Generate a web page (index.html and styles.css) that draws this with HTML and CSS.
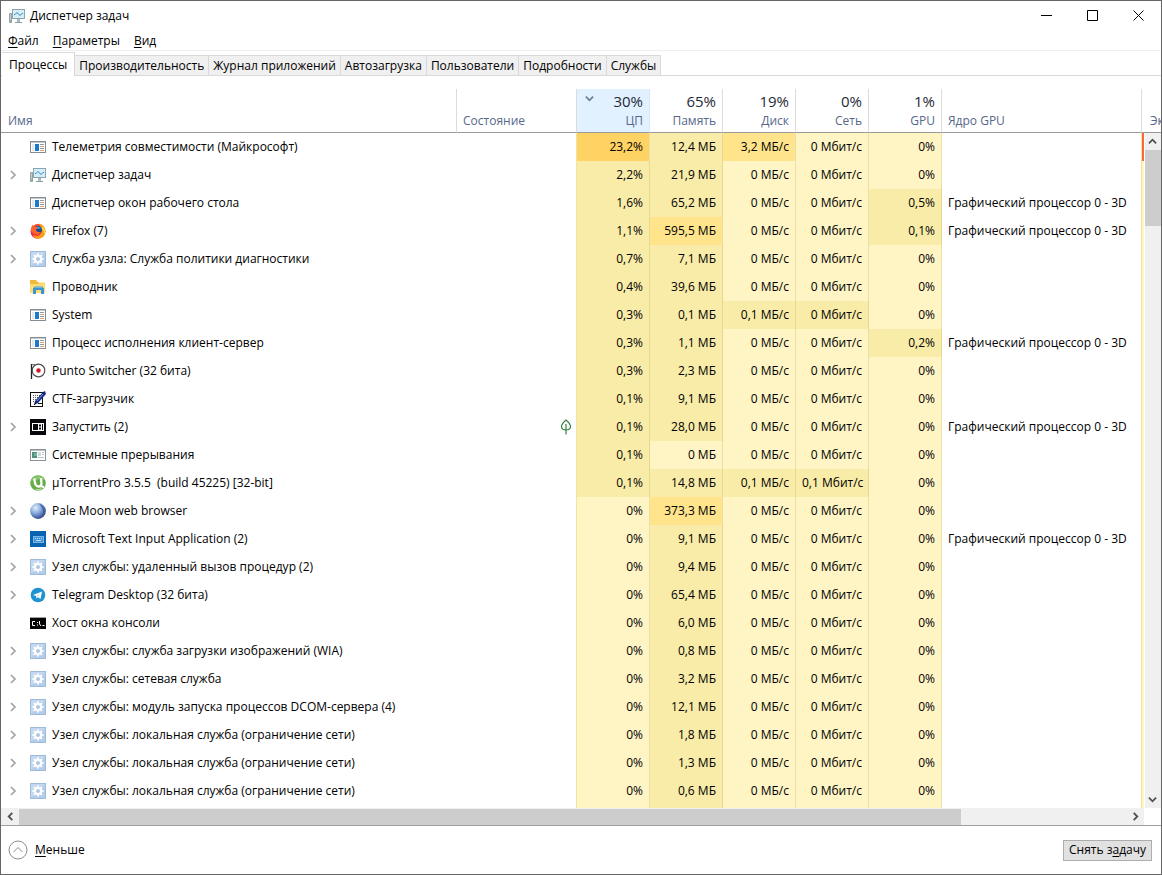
FILE: index.html
```html
<!DOCTYPE html>
<html lang="ru">
<head>
<meta charset="utf-8">
<title>Диспетчер задач</title>
<link rel="stylesheet" href="styles.css">
</head>
<body>
<svg class="sprite" aria-hidden="true">
  <symbol id="i-monitor" viewBox="0 0 16 16">
    <path d="M0.500 5.500h2v9h-2z" fill="#c3cbcf" stroke="#96a1a6"/><path d="M1 13h2" stroke="#5fae62"/>
    <rect x="3.500" y="1.500" width="12" height="9" fill="#d5eef9" stroke="#8ba4ae"/>
    <path d="M5 6.500h1l2-2 3 3 2-2h1" fill="none" stroke="#2c86b8"/>
    <path d="M8 11h3v3H8z" fill="#a9bac2"/><path d="M6 14.500h7" stroke="#8aa0a9"/>
  </symbol>
  <symbol id="i-app" viewBox="0 0 16 16">
    <rect x="0.500" y="2.500" width="15" height="11" fill="#fff" stroke="#858d92"/>
    <path d="M1 3.500h14" stroke="#c3cbd0"/><path d="M2 5h2v7H2z" fill="#e4e8ea"/>
    <path d="M5 5h4v7H5z" fill="#1979ca"/><path d="M10 5.500h4M10 9.500h4" stroke="#8f979c"/><path d="M10 7.500h4M10 11.500h4" stroke="#e5a069"/>
  </symbol>
  <symbol id="i-firefox" viewBox="0 0 16 16">
    <circle cx="8" cy="8.300" r="7.300" fill="#f5402d"/>
    <path d="M8 15.800C3 15.500.5 12 .7 8 2 11 4 14 8 15.800" fill="#d81e5b"/>
    <path d="M9 .5c4 1 6.700 4 6.500 8.500-.3 3.800-3.500 6.600-7.200 6.700-3 0-5-1.700-5.800-4 2 1.800 5.500 2 7.500 0C12 9.500 11 4 9 .5" fill="#ff9c16"/>
    <path d="M12 3c3 2 4 6 2.500 9 0-3-1-5-2.500-6z" fill="#ffdf35"/>
    <circle cx="8" cy="7" r="4" fill="#22468f"/><path d="M5 4.500c2-2 5-1 6.500 1L8 6z" fill="#25a4dd"/>
    <path d="M.8 8C.7 5.500 1.500 3 3 1.500c0 1 .5 1.700 1.500 2 1.500 0 2 .5 3.500 1-.3 1-1.500 1.200-2 2 .4 2.500 2.500 3 5 2.200-1 2.500-4.500 3-7 1.500z" fill="#fb642b"/>
  </symbol>
  <symbol id="i-gear" viewBox="0 0 16 16">
    <rect x="0.500" y="0.500" width="15" height="15" fill="#b4cdeb" stroke="#9fb9da"/>
    <path d="M1 1h14L1 15z" fill="#c4d8ef"/>
    <g stroke="#fff" stroke-width="2"><path d="M8 2.500v11M2.500 8h11M4.100 4.100l7.800 7.800M11.900 4.100l-7.800 7.800"/></g>
    <circle cx="8" cy="8" r="4" fill="#fff"/><circle cx="8" cy="8" r="2" fill="#abc6e6"/>
  </symbol>
  <symbol id="i-folder" viewBox="0 0 16 16">
    <path d="M0 1h6l1.500 2H15v11H0z" fill="#f1b83e"/><path d="M0 5h15v9H0z" fill="#ffdc72"/><path d="M8 3h7v1.500H9z" fill="#fff0b0"/>
    <path d="M3 15V9.500L5 7.500h7l2 2V15h-3v-4H6v4z" fill="#3c95d3"/><path d="M5 8.500h7" stroke="#6fb9e8"/>
  </symbol>
  <symbol id="i-punto" viewBox="0 0 16 16">
    <path d="M1.500 1v15" stroke="#202020" stroke-width="1.300"/><circle cx="8.500" cy="7.500" r="6.300" fill="#fff" stroke="#4e4e4e" stroke-width="1.200"/>
    <path d="M2 1.500h4" stroke="#777"/><circle cx="8.500" cy="7.500" r="2.200" fill="#d3171e"/>
  </symbol>
  <symbol id="i-ctf" viewBox="0 0 16 16">
    <rect x="0.500" y="1.500" width="12" height="14" fill="#fff" stroke="#111"/>
    <path d="M3 4.500h7M3 6.500h7M3 8.500h5M3 10.500h3" stroke="#555" stroke-dasharray="1 1"/>
    <path d="M15 0l1 3-8 9-4 2 1-4 8-9z" fill="#162a80"/><path d="M13 3l-6 7" stroke="#7da0df"/><path d="M4 14l2-2M8 12.500h4" stroke="#111"/>
  </symbol>
  <symbol id="i-start" viewBox="0 0 16 16">
    <path d="M0 0h16v16H0z" fill="#06080c"/><rect x="2.500" y="4.500" width="11" height="7" fill="none" stroke="#fff"/>
    <path d="M8 4h5v8H8z" fill="#fff"/>
    <path d="M9 6.500h2M9 9.500h2" stroke="#06080c" stroke-width="2"/><path d="M12.500 5v6" stroke="#06080c"/>
  </symbol>
  <symbol id="i-interrupt" viewBox="0 0 16 16">
    <rect x="0.500" y="2.500" width="15" height="11" fill="#fff" stroke="#8d9498"/><path d="M1 3.500h14" stroke="#b9c1c5"/>
    <path d="M2 5h5v6H2z" fill="#51907f"/><path d="M4 6h3v3H4z" fill="#69b7a0"/><path d="M8 5h3v4H8z" fill="#d2d8dc"/><path d="M12 5.500h2M12 7.500h2M8 10.500h6" stroke="#b9c3c9"/>
  </symbol>
  <symbol id="i-torrent" viewBox="0 0 16 16">
    <circle cx="8" cy="8" r="7.800" fill="#65ac45"/><path d="M1 6C3 0 12-1 15 5 10 3 5 5 1 6" fill="#8cc66f"/>
    <path d="M4.500 3.500c0 4 .3 8 4 8 2 0 3-1 3-2.500l-.5-6" fill="none" stroke="#fff" stroke-width="2.300"/><path d="M11 9c.3 3 1.500 3 3 3" fill="none" stroke="#fff" stroke-width="2"/>
    <path d="M6 14c2 1.500 5 .5 6-1.500" fill="none" stroke="#e3f3da"/>
  </symbol>
  <symbol id="i-moon" viewBox="0 0 16 16">
    <defs><radialGradient id="moon" cx=".35" cy=".3" r=".8"><stop offset="0" stop-color="#e2edfb"/><stop offset=".45" stop-color="#86a8dc"/><stop offset="1" stop-color="#1c3477"/></radialGradient></defs>
    <circle cx="8" cy="8" r="7.900" fill="url(#moon)"/><path d="M9 .5c6 2 8 9 4 13 1-5-1-9-4-13" fill="#3157a0" opacity=".6"/>
  </symbol>
  <symbol id="i-input" viewBox="0 0 16 16">
    <path d="M0 0h16v16H0z" fill="#0863b1"/><rect x="3.500" y="5.500" width="10" height="6" fill="#4596d8" stroke="#7ab4e6"/>
    <path d="M5 7.500h7" stroke="#b9dbf6" stroke-dasharray="1 1"/><path d="M6 9.500h5" stroke="#b9dbf6"/>
  </symbol>
  <symbol id="i-telegram" viewBox="0 0 16 16">
    <circle cx="8" cy="8" r="7.300" fill="#1f93cf"/><path d="M3 8l9-3.500L10.500 12 8 10.200 6.500 11.500 6 9z" fill="#fff"/><path d="M6 9l4.500-3L7.500 10" fill="#c8dfef"/>
  </symbol>
  <symbol id="i-console" viewBox="0 0 16 16">
    <path d="M0 2h16v12H0z" fill="#050505"/><path d="M0 2.500h16" stroke="#a0a0a0"/>
    <path d="M5 6.500H2.500v4H5M7.500 7v1M7.500 9.500v1M9.500 6v3l1.500 2M12.500 10.500h2" fill="none" stroke="#fff"/>
  </symbol>
  <symbol id="i-leaf" viewBox="0 0 12 16">
    <path d="M6 1C3 3.500 1.500 5.500 1.500 7.500c0 2 1.800 3.500 4.500 3.500s4.500-1.500 4.500-3.500C10.500 5.500 9 3.500 6 1zM6 5v10.500" fill="none" stroke="#358044" stroke-width="1.200"/>
  </symbol>
  <symbol id="i-right" viewBox="0 0 10 10"><path d="M3 1l4 4-4 4" fill="none" stroke="currentColor" stroke-width="1.700"/></symbol>
  <symbol id="i-left" viewBox="0 0 10 10"><path d="M7 1L3 5l4 4" fill="none" stroke="currentColor" stroke-width="2"/></symbol>
  <symbol id="i-next" viewBox="0 0 10 10"><path d="M3 1l4 4-4 4" fill="none" stroke="currentColor" stroke-width="2"/></symbol>
  <symbol id="i-up" viewBox="0 0 10 10"><path d="M1 7l4-4 4 4" fill="none" stroke="currentColor" stroke-width="2"/></symbol>
  <symbol id="i-down" viewBox="0 0 10 10"><path d="M1 3l4 4 4-4" fill="none" stroke="currentColor" stroke-width="2"/></symbol>
</svg>

<div class="window">
  <header class="titlebar">
    <svg class="icon"><use href="#i-monitor"/></svg>
    <h1 class="title">Диспетчер задач</h1>
    <button class="caption" aria-label="Свернуть"><svg viewBox="0 0 11 11"><path d="M0 5.500h11"/></svg></button>
    <button class="caption" aria-label="Развернуть"><svg viewBox="0 0 11 11"><path d="M.5.500h10v10H.5z"/></svg></button>
    <button class="caption" aria-label="Закрыть"><svg viewBox="0 0 11 11"><path d="M.5.500l10 10M10.500.500l-10 10"/></svg></button>
  </header>
  <nav class="menubar">
    <button><u>Ф</u>айл</button><button><u>П</u>араметры</button><button><u>В</u>ид</button>
  </nav>
  <div class="tabs" role="tablist">
    <button class="tab active" role="tab" aria-selected="true">Процессы</button>
    <button class="tab" role="tab">Производительность</button>
    <button class="tab" role="tab">Журнал приложений</button>
    <button class="tab" role="tab">Автозагрузка</button>
    <button class="tab" role="tab">Пользователи</button>
    <button class="tab" role="tab">Подробности</button>
    <button class="tab" role="tab">Службы</button>
  </div>

  <main class="list">
    <table class="grid">
      <colgroup><col><col class="c-state"><col class="c-num"><col class="c-num"><col class="c-num"><col class="c-num"><col class="c-num"><col class="c-engine"><col class="c-energy"></colgroup>
      <thead>
        <tr>
          <th class="name">Имя</th><th>Состояние</th>
          <th class="num sorted"><svg class="sort"><use href="#i-down"/></svg><b>30%</b>ЦП</th>
          <th class="num"><b>65%</b>Память</th><th class="num"><b>19%</b>Диск</th><th class="num"><b>0%</b>Сеть</th><th class="num"><b>1%</b>GPU</th>
          <th>Ядро GPU</th><th class="energy">Эк</th>
        </tr>
      </thead>
      <tbody>
        <tr><td><div class="proc"><i></i><svg class="icon"><use href="#i-app"/></svg>Телеметрия совместимости (Майкрософт)</div></td><td></td><td class="num high">23,2%</td><td class="num low">12,4 МБ</td><td class="num mid">3,2 МБ/с</td><td class="num">0 Мбит/с</td><td class="num">0%</td><td></td><td class="num hot"></td></tr>
        <tr><td><div class="proc"><button class="expand" aria-label="Развернуть группу"><svg><use href="#i-right"/></svg></button><svg class="icon"><use href="#i-monitor"/></svg>Диспетчер задач</div></td><td></td><td class="num low">2,2%</td><td class="num low">21,9 МБ</td><td class="num">0 МБ/с</td><td class="num">0 Мбит/с</td><td class="num">0%</td><td></td><td class="num"></td></tr>
        <tr><td><div class="proc"><i></i><svg class="icon"><use href="#i-app"/></svg>Диспетчер окон рабочего стола</div></td><td></td><td class="num low">1,6%</td><td class="num low">65,2 МБ</td><td class="num">0 МБ/с</td><td class="num">0 Мбит/с</td><td class="num low">0,5%</td><td>Графический процессор 0 - 3D</td><td class="num"></td></tr>
        <tr><td><div class="proc"><button class="expand" aria-label="Развернуть группу"><svg><use href="#i-right"/></svg></button><svg class="icon"><use href="#i-firefox"/></svg>Firefox (7)</div></td><td></td><td class="num low">1,1%</td><td class="num mid">595,5 МБ</td><td class="num">0 МБ/с</td><td class="num">0 Мбит/с</td><td class="num low">0,1%</td><td>Графический процессор 0 - 3D</td><td class="num"></td></tr>
        <tr><td><div class="proc"><button class="expand" aria-label="Развернуть группу"><svg><use href="#i-right"/></svg></button><svg class="icon"><use href="#i-gear"/></svg>Служба узла: Служба политики диагностики</div></td><td></td><td class="num low">0,7%</td><td class="num low">7,1 МБ</td><td class="num">0 МБ/с</td><td class="num">0 Мбит/с</td><td class="num">0%</td><td></td><td class="num"></td></tr>
        <tr><td><div class="proc"><i></i><svg class="icon"><use href="#i-folder"/></svg>Проводник</div></td><td></td><td class="num low">0,4%</td><td class="num low">39,6 МБ</td><td class="num">0 МБ/с</td><td class="num">0 Мбит/с</td><td class="num">0%</td><td></td><td class="num"></td></tr>
        <tr><td><div class="proc"><i></i><svg class="icon"><use href="#i-app"/></svg>System</div></td><td></td><td class="num low">0,3%</td><td class="num low">0,1 МБ</td><td class="num low">0,1 МБ/с</td><td class="num low">0 Мбит/с</td><td class="num">0%</td><td></td><td class="num"></td></tr>
        <tr><td><div class="proc"><i></i><svg class="icon"><use href="#i-app"/></svg>Процесс исполнения клиент-сервер</div></td><td></td><td class="num low">0,3%</td><td class="num low">1,1 МБ</td><td class="num">0 МБ/с</td><td class="num">0 Мбит/с</td><td class="num low">0,2%</td><td>Графический процессор 0 - 3D</td><td class="num"></td></tr>
        <tr><td><div class="proc"><i></i><svg class="icon"><use href="#i-punto"/></svg>Punto Switcher (32 бита)</div></td><td></td><td class="num low">0,3%</td><td class="num low">2,3 МБ</td><td class="num">0 МБ/с</td><td class="num">0 Мбит/с</td><td class="num">0%</td><td></td><td class="num"></td></tr>
        <tr><td><div class="proc"><i></i><svg class="icon"><use href="#i-ctf"/></svg>CTF-загрузчик</div></td><td></td><td class="num low">0,1%</td><td class="num low">9,1 МБ</td><td class="num">0 МБ/с</td><td class="num">0 Мбит/с</td><td class="num">0%</td><td></td><td class="num"></td></tr>
        <tr><td><div class="proc"><button class="expand" aria-label="Развернуть группу"><svg><use href="#i-right"/></svg></button><svg class="icon"><use href="#i-start"/></svg>Запустить (2)</div></td><td class="state"><svg class="leaf"><use href="#i-leaf"/></svg></td><td class="num low">0,1%</td><td class="num low">28,0 МБ</td><td class="num">0 МБ/с</td><td class="num">0 Мбит/с</td><td class="num">0%</td><td>Графический процессор 0 - 3D</td><td class="num"></td></tr>
        <tr><td><div class="proc"><i></i><svg class="icon"><use href="#i-interrupt"/></svg>Системные прерывания</div></td><td></td><td class="num low">0,1%</td><td class="num">0 МБ</td><td class="num">0 МБ/с</td><td class="num">0 Мбит/с</td><td class="num">0%</td><td></td><td class="num"></td></tr>
        <tr><td><div class="proc"><i></i><svg class="icon"><use href="#i-torrent"/></svg>µTorrentPro 3.5.5&nbsp; (build 45225) [32-bit]</div></td><td></td><td class="num low">0,1%</td><td class="num low">14,8 МБ</td><td class="num low">0,1 МБ/с</td><td class="num low">0,1 Мбит/с</td><td class="num">0%</td><td></td><td class="num"></td></tr>
        <tr><td><div class="proc"><button class="expand" aria-label="Развернуть группу"><svg><use href="#i-right"/></svg></button><svg class="icon"><use href="#i-moon"/></svg>Pale Moon web browser</div></td><td></td><td class="num">0%</td><td class="num mid">373,3 МБ</td><td class="num">0 МБ/с</td><td class="num">0 Мбит/с</td><td class="num">0%</td><td></td><td class="num"></td></tr>
        <tr><td><div class="proc"><button class="expand" aria-label="Развернуть группу"><svg><use href="#i-right"/></svg></button><svg class="icon"><use href="#i-input"/></svg>Microsoft Text Input Application (2)</div></td><td></td><td class="num">0%</td><td class="num low">9,1 МБ</td><td class="num">0 МБ/с</td><td class="num">0 Мбит/с</td><td class="num">0%</td><td>Графический процессор 0 - 3D</td><td class="num"></td></tr>
        <tr><td><div class="proc"><button class="expand" aria-label="Развернуть группу"><svg><use href="#i-right"/></svg></button><svg class="icon"><use href="#i-gear"/></svg>Узел службы: удаленный вызов процедур (2)</div></td><td></td><td class="num">0%</td><td class="num low">9,4 МБ</td><td class="num">0 МБ/с</td><td class="num">0 Мбит/с</td><td class="num">0%</td><td></td><td class="num"></td></tr>
        <tr><td><div class="proc"><button class="expand" aria-label="Развернуть группу"><svg><use href="#i-right"/></svg></button><svg class="icon"><use href="#i-telegram"/></svg>Telegram Desktop (32 бита)</div></td><td></td><td class="num">0%</td><td class="num low">65,4 МБ</td><td class="num">0 МБ/с</td><td class="num">0 Мбит/с</td><td class="num">0%</td><td></td><td class="num"></td></tr>
        <tr><td><div class="proc"><i></i><svg class="icon"><use href="#i-console"/></svg>Хост окна консоли</div></td><td></td><td class="num">0%</td><td class="num low">6,0 МБ</td><td class="num">0 МБ/с</td><td class="num">0 Мбит/с</td><td class="num">0%</td><td></td><td class="num"></td></tr>
        <tr><td><div class="proc"><button class="expand" aria-label="Развернуть группу"><svg><use href="#i-right"/></svg></button><svg class="icon"><use href="#i-gear"/></svg>Узел службы: служба загрузки изображений (WIA)</div></td><td></td><td class="num">0%</td><td class="num low">0,8 МБ</td><td class="num">0 МБ/с</td><td class="num">0 Мбит/с</td><td class="num">0%</td><td></td><td class="num"></td></tr>
        <tr><td><div class="proc"><button class="expand" aria-label="Развернуть группу"><svg><use href="#i-right"/></svg></button><svg class="icon"><use href="#i-gear"/></svg>Узел службы: сетевая служба</div></td><td></td><td class="num">0%</td><td class="num low">3,2 МБ</td><td class="num">0 МБ/с</td><td class="num">0 Мбит/с</td><td class="num">0%</td><td></td><td class="num"></td></tr>
        <tr><td><div class="proc"><button class="expand" aria-label="Развернуть группу"><svg><use href="#i-right"/></svg></button><svg class="icon"><use href="#i-gear"/></svg>Узел службы: модуль запуска процессов DCOM-сервера (4)</div></td><td></td><td class="num">0%</td><td class="num low">12,1 МБ</td><td class="num">0 МБ/с</td><td class="num">0 Мбит/с</td><td class="num">0%</td><td></td><td class="num"></td></tr>
        <tr><td><div class="proc"><button class="expand" aria-label="Развернуть группу"><svg><use href="#i-right"/></svg></button><svg class="icon"><use href="#i-gear"/></svg>Узел службы: локальная служба (ограничение сети)</div></td><td></td><td class="num">0%</td><td class="num low">1,8 МБ</td><td class="num">0 МБ/с</td><td class="num">0 Мбит/с</td><td class="num">0%</td><td></td><td class="num"></td></tr>
        <tr><td><div class="proc"><button class="expand" aria-label="Развернуть группу"><svg><use href="#i-right"/></svg></button><svg class="icon"><use href="#i-gear"/></svg>Узел службы: локальная служба (ограничение сети)</div></td><td></td><td class="num">0%</td><td class="num low">1,3 МБ</td><td class="num">0 МБ/с</td><td class="num">0 Мбит/с</td><td class="num">0%</td><td></td><td class="num"></td></tr>
        <tr><td><div class="proc"><button class="expand" aria-label="Развернуть группу"><svg><use href="#i-right"/></svg></button><svg class="icon"><use href="#i-gear"/></svg>Узел службы: локальная служба (ограничение сети)</div></td><td></td><td class="num">0%</td><td class="num low">0,6 МБ</td><td class="num">0 МБ/с</td><td class="num">0 Мбит/с</td><td class="num">0%</td><td></td><td class="num"></td></tr>
        <tr><td></td><td></td><td class="num"></td><td class="num low"></td><td class="num"></td><td class="num"></td><td class="num"></td><td></td><td class="num"></td></tr>
      </tbody>
    </table>
    <div class="vscroll">
      <button aria-label="Вверх"><svg><use href="#i-up"/></svg></button>
      <div class="vthumb"></div>
      <button class="last" aria-label="Вниз"><svg><use href="#i-down"/></svg></button>
    </div>
  </main>
  <div class="hscroll">
    <button aria-label="Влево"><svg><use href="#i-left"/></svg></button>
    <div class="htrack"><div class="hthumb"></div></div>
    <button aria-label="Вправо"><svg><use href="#i-next"/></svg></button>
  </div>
  <footer class="footer">
    <button class="less"><svg viewBox="0 0 20 20"><circle cx="10" cy="10" r="9"/><path d="M5.500 12L10 7.500l4.500 4.500"/></svg><span><u>М</u>еньше</span></button>
    <button class="end">Снять з<u>а</u>дачу</button>
  </footer>
</div>
</body>
</html>
```
FILE: styles.css
```css
* { box-sizing: border-box; }
body {
  margin: 0;
  font: 12px/16px "Open Sans", "Noto Sans", sans-serif;
  color: #000;
  background: #fff;
}
.sprite { position: absolute; width: 0; height: 0; }
button { font: inherit; color: inherit; background: none; border: 0; padding: 0; margin: 0; }
svg { display: block; flex: none; }
u { text-underline-offset: 2px; }
.icon { width: 16px; height: 16px; }

.window {
  display: flex;
  flex-direction: column;
  height: 100vh;
  border: 1px solid #666;
  overflow: hidden;
}
.titlebar { display: flex; align-items: center; height: 29px; padding-left: 8px; flex: none; }
.title { flex: 1; margin: 0 0 0 5px; font-size: 12px; font-weight: 400; }
.caption { display: grid; place-items: center; width: 46px; height: 29px; }
.caption svg { width: 11px; height: 11px; fill: none; stroke: #000; }

.menubar {
  display: flex;
  gap: 14px;
  height: 21px;
  padding: 2px 0 0 7px;
  border-bottom: 1px solid #eee;
  flex: none;
}

.tabs { display: flex; align-items: flex-end; height: 25px; padding-left: 1px; flex: none; box-shadow: inset 0 -1px #d9d9d9; }
.tab {
  height: 21px;
  padding: 0 4px;
  background: #f0f0f0;
  border: 1px solid #d9d9d9;
  border-left: 0;
  white-space: nowrap;
}
.tab.active { height: 24px; padding: 0 7px; background: #fff; border-bottom: 0; }

.list { position: relative; flex: 1; min-height: 0; padding-top: 13px; overflow: hidden; }
.grid { width: 100%; table-layout: fixed; border-collapse: separate; border-spacing: 0; }
.c-state { width: 120px; }
.c-num { width: 73px; }
.c-engine { width: 200px; }
.c-energy { width: 19px; }
th {
  position: relative;
  height: 44px;
  padding: 0 6px 3px;
  vertical-align: bottom;
  text-align: left;
  font-weight: 400;
  color: #56688a;
  border-right: 1px solid #dcdcdc;
  border-bottom: 1px solid #999;
  white-space: nowrap;
  overflow: hidden;
}
th.name { padding-left: 7px; }
th.num { text-align: right; }
th b { display: block; font-size: 15px; line-height: 20px; margin-bottom: 2px; font-weight: 400; color: #1f2937; }
th.energy { padding: 0 0 3px 8px; border-right: 0; }
.sorted { background: #e1f1ff; border-right-color: #d5e8f8; }
.sort { position: absolute; left: 8px; top: 5px; width: 9px; height: 9px; color: #6f7f91; }

td { height: 28px; padding: 0 6px; white-space: nowrap; overflow: hidden; }
td.num { text-align: right; background: #fff4c4; border-right: 1px solid #ebdfa4; }
td.low { background: #f9eca8; border-right-color: #e6d88f; }
td.mid { background: #ffe48b; }
td.high { background: #ffd264; }
td:nth-child(2), td:nth-child(8) { border-right: 1px solid #f0e3a4; }
td:last-child { border-right: 0; }
td.hot { background: #f9683a; }
td:first-child { padding-left: 7px; }
.proc { display: grid; grid-template-columns: 12px 32px 1fr; align-items: center; }
.proc .icon { margin-left: 10px; }
.expand svg { width: 10px; height: 10px; color: #a3a3a3; }
.leaf { width: 12px; height: 16px; margin-left: auto; }
.state { padding-right: 4px; }

.vscroll {
  position: absolute;
  top: 57px;
  right: 0;
  bottom: 0;
  width: 17px;
  display: flex;
  flex-direction: column;
  background: #f0f0f0;
  border-left: 1px solid #fff;
}
.vscroll button, .hscroll button { display: grid; place-items: center; width: 17px; height: 17px; flex: none; color: #505050; }
.vscroll button { width: 15px; }
.vscroll svg, .hscroll svg { width: 9px; height: 9px; }
.vthumb { height: 76px; background: #cdcdcd; }
.vscroll .last { margin-top: auto; }
.hscroll { display: flex; height: 17px; padding-left: 1px; margin-right: 17px; background: #f0f0f0; flex: none; }
.htrack { flex: 1; }
.hthumb { width: 85%; height: 16px; margin-top: 1px; background: #cdcdcd; }

.footer {
  display: flex;
  align-items: center;
  justify-content: space-between;
  height: 49px;
  padding: 0 9px 0 7px;
  border-top: 1px solid #a0a0a0;
  flex: none;
}
.less { display: flex; align-items: center; gap: 7px; }
.less svg { width: 20px; height: 20px; fill: none; stroke: #8c8c8c; }
.end { height: 21px; padding: 0 5px; background: #e1e1e1; border: 1px solid #adadad; }
```
